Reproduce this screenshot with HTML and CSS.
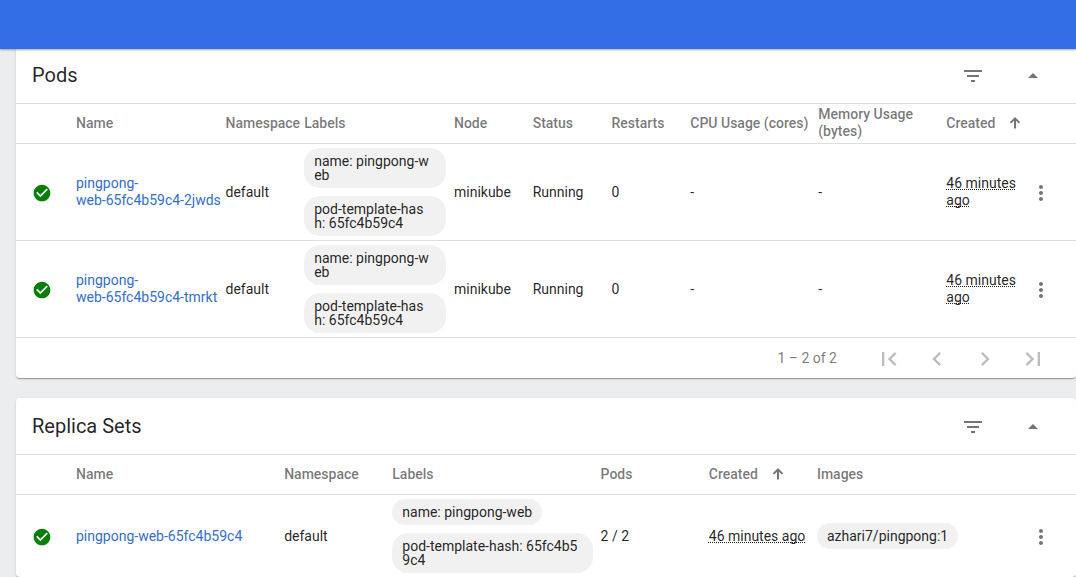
FILE: index.html
```html
<!DOCTYPE html>
<html lang="en">
<head>
<meta charset="utf-8">
<title>Kubernetes Dashboard</title>
<link rel="stylesheet" href="styles.css">
</head>
<body>
<svg class="defs" aria-hidden="true">
  <symbol id="filter" viewBox="0 0 24 24"><path d="M10 18h4v-2h-4v2zM3 6v2h18V6H3zm3 7h12v-2H6v2z"/></symbol>
  <symbol id="collapse" viewBox="0 0 24 24"><path d="M7 14l5-5 5 5z"/></symbol>
  <symbol id="check" viewBox="0 0 24 24"><path d="M12 2C6.48 2 2 6.48 2 12s4.48 10 10 10 10-4.48 10-10S17.52 2 12 2zm-2 15l-5-5 1.41-1.41L10 14.17l7.59-7.59L19 8l-9 9z"/></symbol>
  <symbol id="more" viewBox="0 0 24 24"><path d="M12 8c1.1 0 2-.9 2-2s-.9-2-2-2-2 .9-2 2 .9 2 2 2zm0 2c-1.1 0-2 .9-2 2s.9 2 2 2 2-.9 2-2-.9-2-2-2zm0 6c-1.1 0-2 .9-2 2s.9 2 2 2 2-.9 2-2-.9-2-2-2z"/></symbol>
  <symbol id="sort" viewBox="0 0 12 12"><path d="M5 11.5V3.8L2.2 6.6.8 5.2 6 0l5.2 5.2-1.4 1.4L7 3.8v7.7z"/></symbol>
  <symbol id="first" viewBox="0 0 24 24"><path d="M18.41 16.59L13.82 12l4.59-4.59L17 6l-6 6 6 6zM6 6h2v12H6z"/></symbol>
  <symbol id="prev" viewBox="0 0 24 24"><path d="M15.41 7.41L14 6l-6 6 6 6 1.41-1.41L10.83 12z"/></symbol>
  <symbol id="next" viewBox="0 0 24 24"><path d="M10 6L8.59 7.41 13.17 12l-4.58 4.59L10 18l6-6z"/></symbol>
  <symbol id="last" viewBox="0 0 24 24"><path d="M5.59 7.41L10.18 12l-4.59 4.59L7 18l6-6-6-6zM16 6h2v12h-2z"/></symbol>
</svg>
<header class="toolbar"></header>
<main class="content">
  <section class="card">
    <div class="card-header">
      <h2 class="card-title">Pods</h2>
      <svg class="icon filter"><use href="#filter"/></svg>
      <svg class="icon"><use href="#collapse"/></svg>
    </div>
    <div class="row pods head">
      <span></span><span>Name</span><span>Namespace</span><span>Labels</span><span>Node</span><span>Status</span><span>Restarts</span><span>CPU Usage (cores)</span><span>Memory Usage (bytes)</span>
      <span class="sorted">Created<svg class="arrow"><use href="#sort"/></svg></span>
    </div>
    <div class="row pods">
      <svg class="status"><use href="#check"/></svg>
      <a class="link">pingpong-<br>web-65fc4b59c4-2jwds</a>
      <span>default</span>
      <div class="chips"><span class="chip">name: pingpong-web</span><span class="chip">pod-template-hash: 65fc4b59c4</span></div>
      <span>minikube</span><span>Running</span><span>0</span><span>-</span><span>-</span>
      <span><span class="age">46 minutes ago</span></span>
      <svg class="icon more"><use href="#more"/></svg>
    </div>
    <div class="row pods">
      <svg class="status"><use href="#check"/></svg>
      <a class="link">pingpong-<br>web-65fc4b59c4-tmrkt</a>
      <span>default</span>
      <div class="chips"><span class="chip">name: pingpong-web</span><span class="chip">pod-template-hash: 65fc4b59c4</span></div>
      <span>minikube</span><span>Running</span><span>0</span><span>-</span><span>-</span>
      <span><span class="age">46 minutes ago</span></span>
      <svg class="icon more"><use href="#more"/></svg>
    </div>
    <div class="paginator">
      <span class="range">1 – 2 of 2</span>
      <svg class="page"><use href="#first"/></svg>
      <svg class="page"><use href="#prev"/></svg>
      <svg class="page"><use href="#next"/></svg>
      <svg class="page"><use href="#last"/></svg>
    </div>
  </section>
  <section class="card">
    <div class="card-header">
      <h2 class="card-title">Replica Sets</h2>
      <svg class="icon filter"><use href="#filter"/></svg>
      <svg class="icon"><use href="#collapse"/></svg>
    </div>
    <div class="row sets head">
      <span></span><span>Name</span><span>Namespace</span><span>Labels</span><span>Pods</span>
      <span class="sorted">Created<svg class="arrow"><use href="#sort"/></svg></span>
      <span>Images</span>
    </div>
    <div class="row sets">
      <svg class="status"><use href="#check"/></svg>
      <a class="link">pingpong-web-65fc4b59c4</a>
      <span>default</span>
      <div class="chips"><span class="chip">name: pingpong-web</span><span class="chip">pod-template-hash: 65fc4b59c4</span></div>
      <span>2 / 2</span>
      <span><span class="age">46 minutes ago</span></span>
      <div class="chips"><span class="chip">azhari7/pingpong:1</span></div>
      <svg class="icon more"><use href="#more"/></svg>
    </div>
  </section>
</main>
</body>
</html>
```
FILE: styles.css
```css
* { box-sizing: border-box; }
body {
  margin: 0;
  height: 577px;
  overflow: hidden;
  display: flex;
  flex-direction: column;
  background: #ecedef;
  color: rgba(0, 0, 0, .87);
  font: 14px/17px Roboto, sans-serif;
}
.defs { display: none; }
svg { fill: currentColor; flex: none; display: block; }
.toolbar {
  flex: none;
  height: 49px;
  background: #326de6;
  box-shadow: 0 1px 2px rgba(0, 0, 0, .35);
  z-index: 1;
}
.content {
  flex: none;
  display: flex;
  flex-direction: column;
  gap: 20px;
  margin-top: -2px;
  padding-left: 16px;
}
.card {
  background: #fff;
  border-radius: 4px;
  box-shadow: 0 2px 1px -1px rgba(0, 0, 0, .2), 0 1px 1px rgba(0, 0, 0, .14), 0 1px 3px rgba(0, 0, 0, .12);
}
.card-header {
  display: flex;
  align-items: center;
  height: 56px;
  padding: 0 31px 0 16px;
}
.card-title {
  flex: 1;
  margin: 0;
  font-size: 20px;
  line-height: 24px;
  font-weight: 400;
}
.icon { width: 24px; height: 24px; color: #757575; }
.card-header .icon { margin-top: 2px; }
.filter { margin-right: 36px; }
.row {
  display: grid;
  align-items: center;
  padding-left: 16px;
  border-top: 1px solid #dedede;
  min-height: 97px;
}
.pods { grid-template-columns: 44px 149.5px 78.7px 149.8px 78.7px 78.8px 78.8px 128px 128.1px 82.6px 24px; }
.sets { grid-template-columns: 44px 208.2px 108.1px 208.3px 108.2px 108.2px 212px 24px; min-height: 83px; }
.head { min-height: 40px; color: rgba(0, 0, 0, .54); font-weight: 500; }
.head span { white-space: nowrap; }
.head span:nth-child(9) { white-space: normal; padding: 0 20px 1px 0; }
.sorted { display: flex; align-items: center; gap: 14px; }
.arrow { width: 12px; height: 12px; margin-bottom: 2px; }
.status { width: 20px; height: 20px; color: #008000; margin-top: 1px; }
.link { color: #326dd9; white-space: nowrap; }
.age {
  text-decoration: underline dotted 1px;
  text-underline-offset: 1px;
  text-decoration-skip-ink: none;
}
.more { margin-top: 1px; }
.chips { display: flex; flex-direction: column; align-items: flex-start; gap: 8px; padding-right: 8px; }
.chip {
  max-width: 100%;
  padding: 6px 10px;
  border-radius: 16px;
  background: #f1f1f1;
  line-height: 14px;
  word-break: break-all;
}
.pods .chip { padding-right: 16px; }
.paginator {
  display: flex;
  align-items: center;
  justify-content: flex-end;
  gap: 20px;
  height: 41px;
  padding-right: 29px;
  border-top: 1px solid #dedede;
  color: rgba(0, 0, 0, .54);
}
.range { margin-right: 18px; }
.page { width: 28px; height: 28px; margin-top: 2px; color: #bdbdbd; }
```
